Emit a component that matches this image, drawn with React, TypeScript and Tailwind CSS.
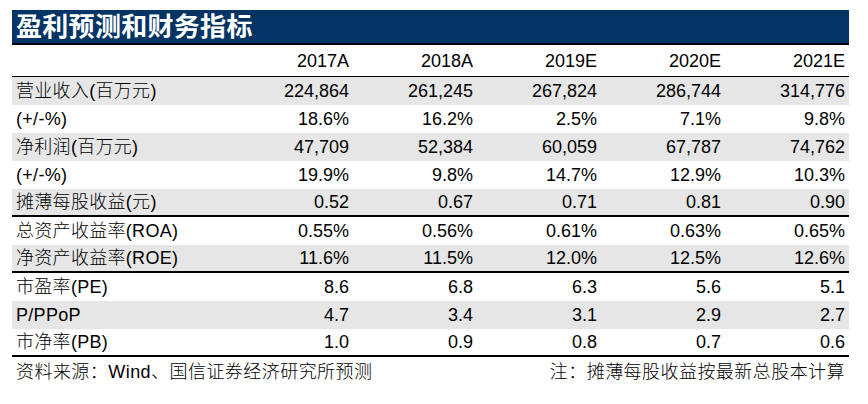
type Row = {
  label: string;
  values: string[];
  gray?: boolean;
  thick?: boolean;
};

const YEARS = ["2017A", "2018A", "2019E", "2020E", "2021E"];

const ROWS: Row[] = [
  { label: "营业收入(百万元)", values: ["224,864", "261,245", "267,824", "286,744", "314,776"], gray: true },
  { label: "(+/-%)", values: ["18.6%", "16.2%", "2.5%", "7.1%", "9.8%"] },
  { label: "净利润(百万元)", values: ["47,709", "52,384", "60,059", "67,787", "74,762"], gray: true },
  { label: "(+/-%)", values: ["19.9%", "9.8%", "14.7%", "12.9%", "10.3%"] },
  { label: "摊薄每股收益(元)", values: ["0.52", "0.67", "0.71", "0.81", "0.90"], gray: true, thick: true },
  { label: "总资产收益率(ROA)", values: ["0.55%", "0.56%", "0.61%", "0.63%", "0.65%"] },
  { label: "净资产收益率(ROE)", values: ["11.6%", "11.5%", "12.0%", "12.5%", "12.6%"], gray: true, thick: true },
  { label: "市盈率(PE)", values: ["8.6", "6.8", "6.3", "5.6", "5.1"] },
  { label: "P/PPoP", values: ["4.7", "3.4", "3.1", "2.9", "2.7"], gray: true },
  { label: "市净率(PB)", values: ["1.0", "0.9", "0.8", "0.7", "0.6"], thick: true },
];

function TableRow({ row }: { row: Row }) {
  return (
    <div
      className={
        "grid grid-cols-[217px_repeat(5,1fr)] h-[28px] items-center " +
        (row.gray ? "bg-[#e6e6e6] " : "bg-white ") +
        (row.thick ? "border-b-2 border-black" : "")
      }
    >
      <div className="pl-[4px] whitespace-nowrap tracking-[0.3px] font-light">{row.label}</div>
      {row.values.map((v, i) => (
        <div key={i} className="text-right pr-[4px]">
          {v}
        </div>
      ))}
    </div>
  );
}

export default function App() {
  return (
    <div className="bg-white w-[868px] h-[404px] pt-[10px] pl-[12px]">
      <div
        className="w-[837px] text-[18px] leading-none text-black"
        style={{ fontFamily: '"Liberation Sans", "Noto Sans CJK SC", sans-serif' }}
      >
        {/* title bar */}
        <div className="h-[35px] bg-[#033463] border-b-2 border-black flex items-center pl-[4px]">
          <span className="text-white text-[26px] font-bold tracking-[0.3px]">盈利预测和财务指标</span>
        </div>

        {/* header */}
        <div className="grid grid-cols-[217px_repeat(5,1fr)] h-[32px] items-center border-b border-black">
          <div />
          {YEARS.map((y) => (
            <div key={y} className="text-right pr-[4px]">
              {y}
            </div>
          ))}
        </div>

        {ROWS.map((row, i) => (
          <TableRow key={i} row={row} />
        ))}

        {/* footer */}
        <div className="flex justify-between items-center h-[30px] px-[4px] tracking-[0.45px] font-light">
          <span>资料来源：Wind、国信证券经济研究所预测</span>
          <span>注：摊薄每股收益按最新总股本计算</span>
        </div>
      </div>
    </div>
  );
}
